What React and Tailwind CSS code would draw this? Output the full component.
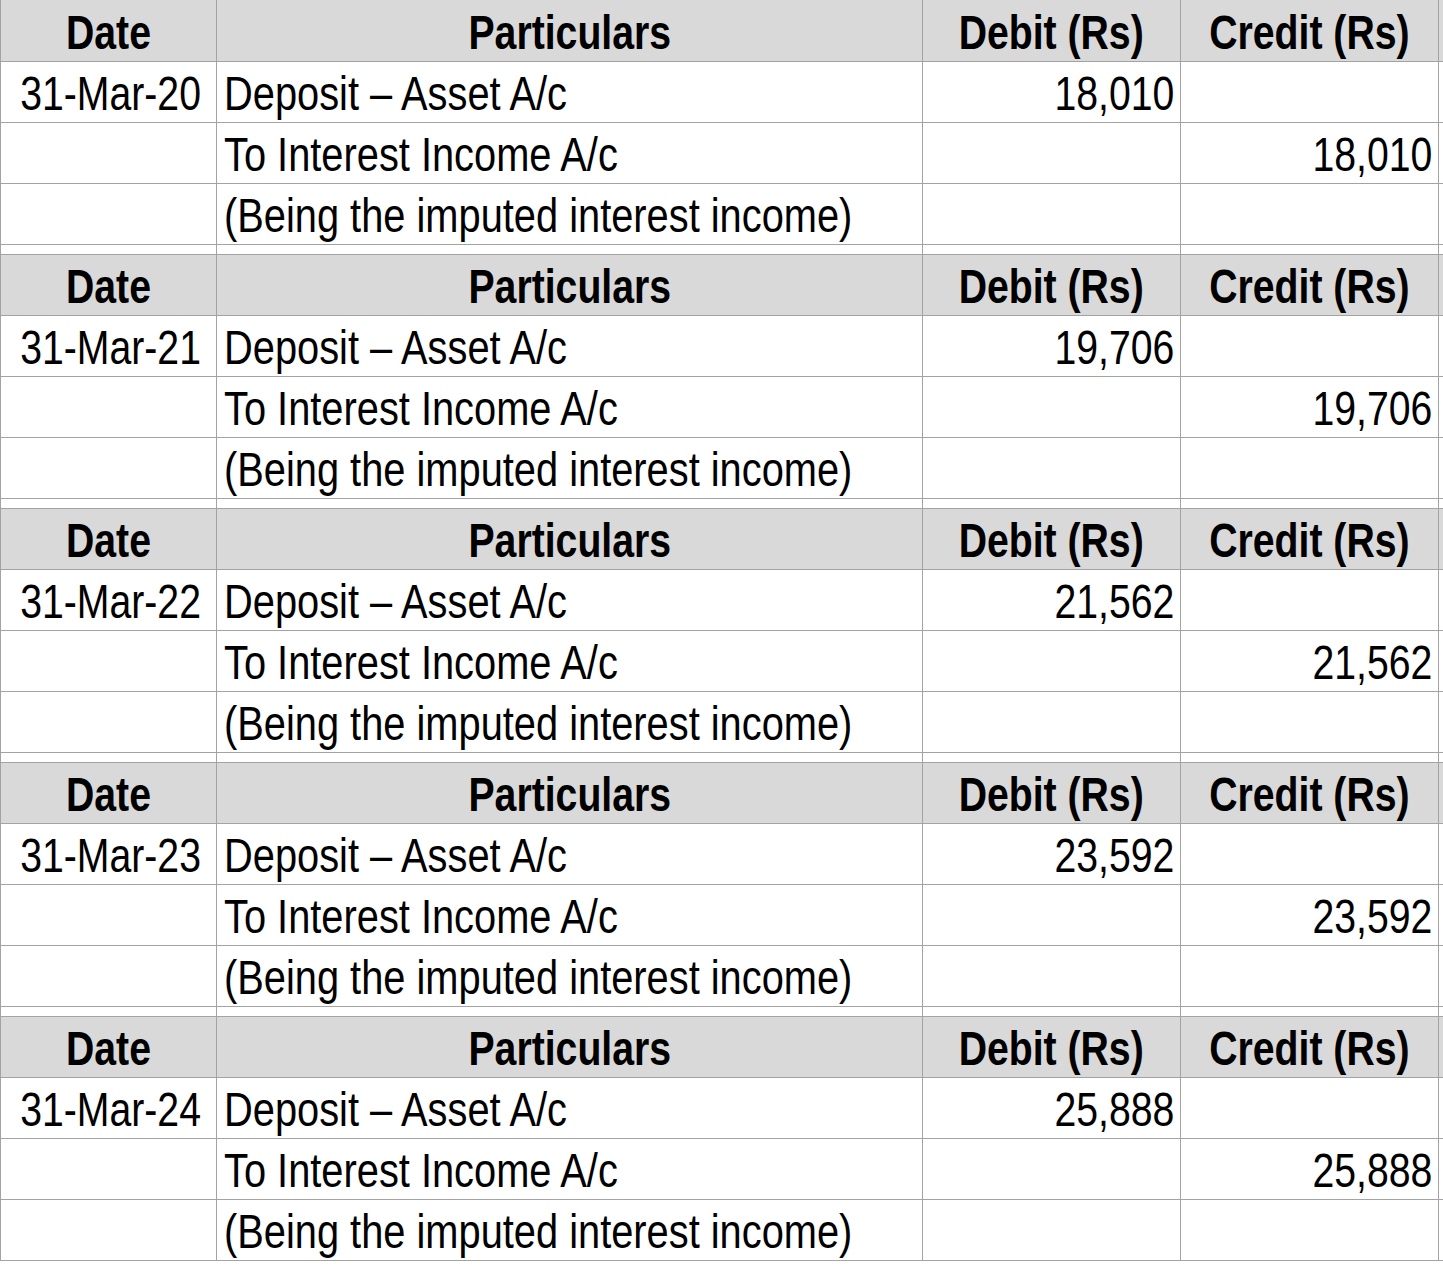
import React from 'react';

const entries = [
  { date: '31-Mar-20', amount: '18,010' },
  { date: '31-Mar-21', amount: '19,706' },
  { date: '31-Mar-22', amount: '21,562' },
  { date: '31-Mar-23', amount: '23,592' },
  { date: '31-Mar-24', amount: '25,888' },
];

// Arial Narrow look: Liberation Sans squeezed horizontally
const grid = 'grid grid-cols-[216px_706px_258px_258px] border-l border-[#a3a3a3]';
const cell = 'border-r border-[#a3a3a3] whitespace-nowrap pt-[3px] leading-[57px]';

const Narrow = ({ children, align = 'center', wide = false }) => {
  const origin = align === 'left' ? 'origin-left' : align === 'right' ? 'origin-right' : 'origin-center';
  const scale = wide ? 'scale-x-[0.838]' : 'scale-x-[0.825]';
  return <span className={`inline-block ${scale} ${origin}`}>{children}</span>;
};

const HeaderRow = ({ first }) => {
  const pad = first ? 'pt-[4px]' : '';
  return (
    <div className={`${grid} ${first ? 'h-[62px]' : 'h-[61px]'} bg-[#d9d9d9] border-b font-bold`}>
      <div className={`${cell} ${pad} text-center`}><Narrow>Date</Narrow></div>
      <div className={`${cell} ${pad} text-center`}><Narrow>Particulars</Narrow></div>
      <div className={`${cell} ${pad} text-center`}><Narrow>Debit (Rs)</Narrow></div>
      <div className={`${cell} ${pad} text-center`}><Narrow>Credit (Rs)</Narrow></div>
    </div>
  );
};

const Row = ({ date, particulars, debit, credit }) => (
  <div className={`${grid} h-[61px] bg-white border-b`}>
    <div className={`${cell} text-center`}>{date && <Narrow>{date}</Narrow>}</div>
    <div className={`${cell} pl-[7px]`}><Narrow align="left" wide>{particulars}</Narrow></div>
    <div className={`${cell} text-right pr-[6px]`}>{debit && <Narrow align="right">{debit}</Narrow>}</div>
    <div className={`${cell} text-right pr-[6px]`}>{credit && <Narrow align="right">{credit}</Narrow>}</div>
  </div>
);

const Spacer = () => (
  <div className={`${grid} h-[10px] bg-white border-b`}>
    <div className="border-r border-[#ececec]" />
    <div className="border-r border-[#ececec]" />
    <div className="border-r border-[#ececec]" />
    <div className="border-r border-[#a3a3a3]" />
  </div>
);

export default function App() {
  return (
    <div className="w-[1443px] h-[1266px] bg-white text-black text-[47.5px] font-['Liberation_Sans',Arial,sans-serif] [&_*]:border-[#a3a3a3]">
      {entries.map((e, i) => (
        <div key={e.date}>
          <HeaderRow first={i === 0} />
          <Row date={e.date} particulars="Deposit – Asset A/c" debit={e.amount} />
          <Row particulars="To Interest Income A/c" credit={e.amount} />
          <Row particulars="(Being the imputed interest income)" />
          {i < entries.length - 1 && <Spacer />}
        </div>
      ))}
    </div>
  );
}
